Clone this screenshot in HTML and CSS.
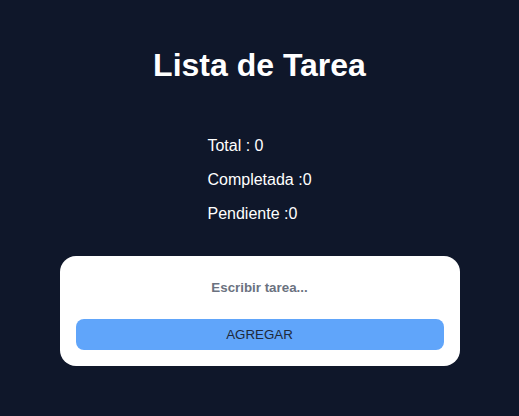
FILE: index.html
```html
<!DOCTYPE html>
<html lang="es">
<head>
<meta charset="utf-8">
<title>Lista de Tarea</title>
<link rel="stylesheet" href="styles.css">
</head>
<body>
<main class="app">
  <h1 class="title">Lista de Tarea</h1>
  <div class="stats">
    <p class="stat">Total : 0</p>
    <p class="stat">Completada :0</p>
    <p class="stat">Pendiente :0</p>
  </div>
  <form class="card">
    <input class="task-input" type="text" placeholder="Escribir tarea...">
    <button class="add-btn" type="button">AGREGAR</button>
  </form>
</main>
</body>
</html>
```
FILE: styles.css
```css
html, body {
  margin: 0;
  padding: 0;
  background: #0f172a;
  font-family: "Liberation Sans", Arial, sans-serif;
}
.app {
  display: flex;
  flex-direction: column;
  align-items: center;
  padding-top: 47px;
}
.title {
  margin: 0;
  font-size: 32px;
  line-height: 37px;
  font-weight: bold;
  color: #ffffff;
}
.stats {
  margin-top: 53px;
  display: flex;
  flex-direction: column;
  gap: 16px;
  width: fit-content;
}
.stat {
  margin: 0;
  font-size: 16px;
  line-height: 18px;
  color: #ffffff;
}
.card {
  margin-top: 33px;
  width: 400px;
  box-sizing: border-box;
  padding: 16px;
  background: #ffffff;
  border-radius: 16px;
  display: flex;
  flex-direction: column;
  gap: 16px;
}
.task-input {
  height: 31px;
  border: none;
  outline: none;
  padding: 0;
  background: transparent;
  text-align: center;
  font-family: inherit;
  font-size: 13.333px;
  font-weight: bold;
  color: #374151;
}
.task-input::placeholder {
  color: #6b7280;
  font-weight: bold;
}
.add-btn {
  height: 31px;
  border: none;
  border-radius: 8px;
  background: #60a5fa;
  color: #1e293b;
  font-family: inherit;
  font-size: 13.333px;
  padding: 0;
}
```
